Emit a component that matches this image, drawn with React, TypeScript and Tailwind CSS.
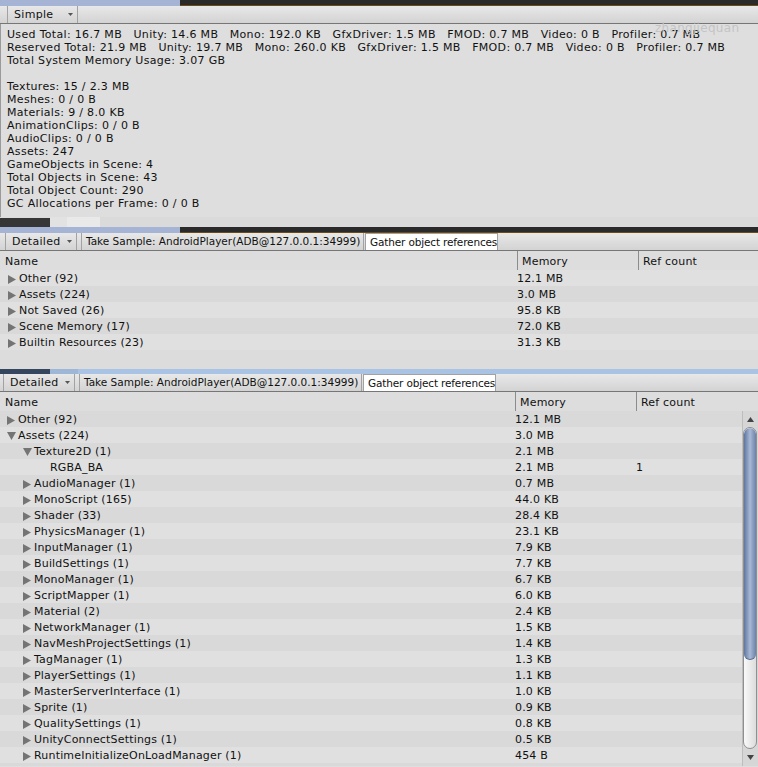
import React from "react";

type Item = {
  name: string;
  depth: number;
  open?: boolean;
  leaf?: boolean;
  mem: string;
  refs?: string;
};

const topItems: Item[] = [
  { name: "Other (92)", depth: 0, mem: "12.1 MB" },
  { name: "Assets (224)", depth: 0, mem: "3.0 MB" },
  { name: "Not Saved (26)", depth: 0, mem: "95.8 KB" },
  { name: "Scene Memory (17)", depth: 0, mem: "72.0 KB" },
  { name: "Builtin Resources (23)", depth: 0, mem: "31.3 KB" },
];

const bottomItems: Item[] = [
  { name: "Other (92)", depth: 0, mem: "12.1 MB" },
  { name: "Assets (224)", depth: 0, open: true, mem: "3.0 MB" },
  { name: "Texture2D (1)", depth: 1, open: true, mem: "2.1 MB" },
  { name: "RGBA_BA", depth: 2, leaf: true, mem: "2.1 MB", refs: "1" },
  { name: "AudioManager (1)", depth: 1, mem: "0.7 MB" },
  { name: "MonoScript (165)", depth: 1, mem: "44.0 KB" },
  { name: "Shader (33)", depth: 1, mem: "28.4 KB" },
  { name: "PhysicsManager (1)", depth: 1, mem: "23.1 KB" },
  { name: "InputManager (1)", depth: 1, mem: "7.9 KB" },
  { name: "BuildSettings (1)", depth: 1, mem: "7.7 KB" },
  { name: "MonoManager (1)", depth: 1, mem: "6.7 KB" },
  { name: "ScriptMapper (1)", depth: 1, mem: "6.0 KB" },
  { name: "Material (2)", depth: 1, mem: "2.4 KB" },
  { name: "NetworkManager (1)", depth: 1, mem: "1.5 KB" },
  { name: "NavMeshProjectSettings (1)", depth: 1, mem: "1.4 KB" },
  { name: "TagManager (1)", depth: 1, mem: "1.3 KB" },
  { name: "PlayerSettings (1)", depth: 1, mem: "1.1 KB" },
  { name: "MasterServerInterface (1)", depth: 1, mem: "1.0 KB" },
  { name: "Sprite (1)", depth: 1, mem: "0.9 KB" },
  { name: "QualitySettings (1)", depth: 1, mem: "0.8 KB" },
  { name: "UnityConnectSettings (1)", depth: 1, mem: "0.5 KB" },
  { name: "RuntimeInitializeOnLoadManager (1)", depth: 1, mem: "454 B" },
];

const statsLines = [
  "Textures: 15 / 2.3 MB",
  "Meshes: 0 / 0 B",
  "Materials: 9 / 8.0 KB",
  "AnimationClips: 0 / 0 B",
  "AudioClips: 0 / 0 B",
  "Assets: 247",
  "GameObjects in Scene: 4",
  "Total Objects in Scene: 43",
  "Total Object Count: 290",
  "GC Allocations per Frame: 0 / 0 B",
];

const Arrow = ({ open }: { open?: boolean }) =>
  open ? (
    <svg width="9" height="8" viewBox="0 0 9 8">
      <polygon points="0,0 9,0 4.5,8" fill="#747474" />
    </svg>
  ) : (
    <svg width="8" height="9" viewBox="0 0 8 9">
      <polygon points="0,0 8,4.5 0,9" fill="#747474" />
    </svg>
  );

const DropArrow = () => (
  <svg width="5" height="3" viewBox="0 0 5 3">
    <polygon points="0,0 5,0 2.5,3" fill="#555" />
  </svg>
);

// window tab strip: blue tab on the left, dark bar behind
const TabStrip = () => (
  <div className="flex h-[6px]">
    <div className="w-[180px] bg-[#a5b3d5]" />
    <div className="flex-1 flex flex-col">
      <div className="flex-1 bg-[#2a2a2a]" />
      <div className="h-px bg-[#6d4b17]" />
    </div>
  </div>
);

const Toolbar = ({ mode, shift }: { mode: string; shift: number }) => (
  <div className="flex h-[18px] border-b border-[#767676] bg-gradient-to-b from-[#e8e8e8] to-[#d3d3d3] text-[10.5px] leading-[17px] whitespace-nowrap">
    <div style={{ width: shift }} />
    <div className="flex w-[72px] items-center justify-between border-x border-[#a2a2a2] pl-[6px] pr-[4px] text-[11px] tracking-[0.3px]">
      <span>{mode}</span>
      <DropArrow />
    </div>
    <div className="w-[4px]" />
    <div className="w-[283px] border-x border-[#a2a2a2] pl-[4px]">
      Take Sample: AndroidPlayer(ADB@127.0.0.1:34999)
    </div>
    <div className="ml-[1px] w-[133px] border border-b-0 border-[#a2a2a2] bg-white pl-[4px] tracking-[-0.15px]">
      Gather object references
    </div>
  </div>
);

const Header = ({ nameW, memW }: { nameW: number; memW: number }) => (
  <div className="flex h-[19px] bg-[#dddddd] text-[11px] tracking-[0.2px]">
    <div className="pl-[5px] pt-[3px]" style={{ width: nameW }}>
      Name
    </div>
    <div className="border-l border-[#8c8c8c] pl-[4px] pt-[3px]" style={{ width: memW }}>
      Memory
    </div>
    <div className="flex-1 border-l border-[#8c8c8c] pl-[4px] pt-[3px]">Ref count</div>
  </div>
);

const TreeRow = ({
  item,
  i,
  nameW,
  memW,
  base,
}: {
  item: Item;
  i: number;
  nameW: number;
  memW: number;
  base: number;
}) => (
  <div
    className={
      "flex h-[16px] shrink-0 pt-[2px] text-[11px] leading-[14px] tracking-[0.18px] " +
      (i % 2 === 0 ? "bg-[#d9d9d9]" : "bg-[#e0e0e0]")
    }
  >
    <div className="flex items-center whitespace-nowrap" style={{ width: nameW, paddingLeft: base + item.depth * 16 }}>
      <div className="flex w-[11px] items-center">{!item.leaf && <Arrow open={item.open} />}</div>
      <span>{item.name}</span>
    </div>
    <div style={{ width: memW }}>{item.mem}</div>
    <div className="flex-1">{item.refs}</div>
  </div>
);

const Scrollbar = () => (
  <div className="flex w-[16px] flex-col items-center border-l border-[#bdbdbd] bg-[#d6d6d6] pr-px">
    <div className="flex h-[16px] items-center justify-center">
      <svg width="7" height="5" viewBox="0 0 7 5">
        <polygon points="0,5 7,5 3.5,0" fill="#444" />
      </svg>
    </div>
    <div className="flex h-[322px] w-[14px] flex-col overflow-hidden rounded-full border border-[#8f8f8f] bg-gradient-to-r from-[#f9f9f9] to-[#dcdcdc]">
      <div className="h-[232px] rounded-full border-b border-[#56698a] bg-gradient-to-r from-[#5f769f] via-[#a9b9d4] to-[#6c82a9]" />
    </div>
    <div className="flex flex-1 items-center justify-center">
      <svg width="7" height="5" viewBox="0 0 7 5">
        <polygon points="0,0 7,0 3.5,5" fill="#444" />
      </svg>
    </div>
  </div>
);

export default function App() {
  return (
    <div
      className="relative h-[767px] w-[758px] overflow-hidden bg-[#dedede] text-[#111]"
      style={{ fontFamily: '"DejaVu Sans", Verdana, sans-serif' }}
    >
      <TabStrip />
      {/* simple view toolbar */}
      <div className="flex h-[18px] border-b border-[#767676] bg-gradient-to-b from-[#e8e8e8] to-[#d3d3d3] text-[11px] leading-[17px] tracking-[0.3px]">
        <div className="w-[7px]" />
        <div className="flex w-[71px] items-center justify-between border-x border-[#a2a2a2] pl-[6px] pr-[4px]">
          <span>Simple</span>
          <DropArrow />
        </div>
      </div>

      <div className="h-[193px] border-l border-[#9a9a9a] pl-[6px] pt-[4px] text-[11px] leading-[13px] tracking-[0.32px] whitespace-pre">
        <div>Used Total: 16.7 MB   Unity: 14.6 MB   Mono: 192.0 KB   GfxDriver: 1.5 MB   FMOD: 0.7 MB   Video: 0 B   Profiler: 0.7 MB</div>
        <div>Reserved Total: 21.9 MB   Unity: 19.7 MB   Mono: 260.0 KB   GfxDriver: 1.5 MB   FMOD: 0.7 MB   Video: 0 B   Profiler: 0.7 MB</div>
        <div>Total System Memory Usage: 3.07 GB</div>
        <div className="h-[13px]" />
        {statsLines.map((l) => (
          <div key={l}>{l}</div>
        ))}
      </div>

      {/* strip between the two panes */}
      <div className="flex h-[10px] bg-[#dcdcdc]">
        <div className="mt-px w-[50px] bg-[#363636]" />
        <div className="w-[17px] bg-[#e2e2e2]" />
        <div className="w-[33px] bg-[#e9e9e9]" />
        <div className="flex-1 bg-[#dadada]" />
      </div>
      <TabStrip />
      <Toolbar mode="Detailed" shift={5} />
      <Header nameW={517} memW={121} />
      <div className="flex h-[99px] flex-col bg-[#dcdcdc]">
        {topItems.map((it, i) => (
          <TreeRow key={i} item={it} i={i + 1} nameW={517} memW={121} base={8} />
        ))}
      </div>

      <div className="flex h-[5px]">
        <div className="w-[50px] bg-[#34475f]" />
        <div className="w-[28px] bg-[#9fb7d6]" />
        <div className="flex-1 bg-[#a9c3e5]" />
      </div>
      <Toolbar mode="Detailed" shift={3} />
      <Header nameW={515} memW={121} />
      <div className="flex h-[355px]">
        <div className="flex w-[742px] flex-col overflow-hidden bg-[#d9d9d9]">
          {bottomItems.map((it, i) => (
            <TreeRow key={i} item={it} i={i} nameW={515} memW={121} base={7} />
          ))}
        </div>
        <Scrollbar />
      </div>

      <div className="pointer-events-none absolute left-[655px] top-[19px] text-[12px] tracking-[0.3px] text-[#c4c4c4]">
        zhangjiequan
      </div>
    </div>
  );
}
